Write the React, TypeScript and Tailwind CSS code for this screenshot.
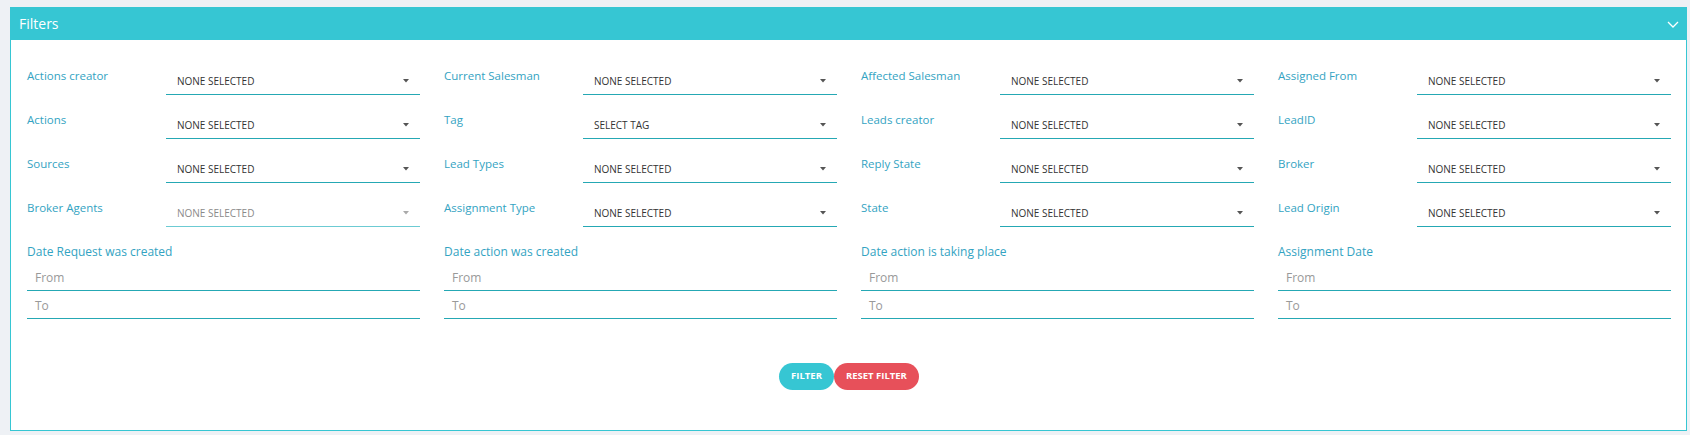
import { ReactNode } from 'react';

type Field = { label: string; value: string; disabled?: boolean };

const columns: { fields: Field[]; date: string }[] = [
  {
    fields: [
      { label: 'Actions creator', value: 'NONE SELECTED' },
      { label: 'Actions', value: 'NONE SELECTED' },
      { label: 'Sources', value: 'NONE SELECTED' },
      { label: 'Broker Agents', value: 'NONE SELECTED', disabled: true },
    ],
    date: 'Date Request was created',
  },
  {
    fields: [
      { label: 'Current Salesman', value: 'NONE SELECTED' },
      { label: 'Tag', value: 'SELECT TAG' },
      { label: 'Lead Types', value: 'NONE SELECTED' },
      { label: 'Assignment Type', value: 'NONE SELECTED' },
    ],
    date: 'Date action was created',
  },
  {
    fields: [
      { label: 'Affected Salesman', value: 'NONE SELECTED' },
      { label: 'Leads creator', value: 'NONE SELECTED' },
      { label: 'Reply State', value: 'NONE SELECTED' },
      { label: 'State', value: 'NONE SELECTED' },
    ],
    date: 'Date action is taking place',
  },
  {
    fields: [
      { label: 'Assigned From', value: 'NONE SELECTED' },
      { label: 'LeadID', value: 'NONE SELECTED' },
      { label: 'Broker', value: 'NONE SELECTED' },
      { label: 'Lead Origin', value: 'NONE SELECTED' },
    ],
    date: 'Assignment Date',
  },
];

const Caret = ({ muted }: { muted?: boolean }) => (
  <svg width="6" height="4" viewBox="0 0 6 4" className="shrink-0">
    <path d="M0 0h6L3 3.5z" fill={muted ? '#aaa' : '#555'} />
  </svg>
);

const SelectRow = ({ field }: { field: Field }) => (
  <div className="flex items-start h-[35px]">
    <div className="w-[139px] pt-[7px] text-[11.5px] leading-[18px] text-[#33a3c2]">{field.label}</div>
    <div
      className={`flex-1 h-[35px] flex items-end justify-between pl-[11px] pr-[11px] pb-[5px] border-b ${
        field.disabled ? 'border-[#6ccbd3]' : 'border-[#25a8b4]'
      }`}
    >
      <span
        className={`text-[10px] leading-[15px] ${
          field.disabled ? 'text-[#8a8a8a]' : 'text-[#333]'
        }`}
      >
        {field.value}
      </span>
      <span className="pb-[6px]">
        <Caret muted={field.disabled} />
      </span>
    </div>
  </div>
);

const DateInput = ({ children }: { children: ReactNode }) => (
  <div className="h-[28px] pt-[3px] pl-[8px] flex items-center border-b border-[#25a8b4] text-[12px] text-[#999]">
    {children}
  </div>
);

export default function App() {
  return (
    <div
      className="w-full h-screen bg-[#eef1f5] pt-[7px] pl-[10px] pr-[3px]"
      style={{ fontFamily: '"Open Sans", "Liberation Sans", sans-serif' }}
    >
      <div className="h-[424px] border border-[#36c6d3] bg-white flex flex-col">
        {/* Header */}
        <div className="h-[32px] bg-[#36c6d3] flex items-center justify-between pl-[8px] pr-[7px]">
          <span className="text-[14px] text-white leading-none">Filters</span>
          <svg width="12" height="7" viewBox="0 0 12 7" fill="none">
            <path d="M1 1l5 5 5-5" stroke="white" strokeWidth="1.3" />
          </svg>
        </div>

        {/* Body */}
        <div className="pt-[20px] pl-[16px] pr-[15px]">
          <div className="grid grid-cols-4 gap-x-[24px]">
            {columns.map((col) => (
              <div key={col.date} className="flex flex-col">
                <div className="flex flex-col gap-[9px]">
                  {col.fields.map((f) => (
                    <SelectRow key={f.label} field={f} />
                  ))}
                </div>
                <div className="mt-[16px] text-[12px] leading-[18px] text-[#33a3c2]">{col.date}</div>
                <div className="mt-[2px]">
                  <DateInput>From</DateInput>
                  <DateInput>To</DateInput>
                </div>
              </div>
            ))}
          </div>

          {/* Actions */}
          <div className="flex justify-center mt-[44px]">
            <button className="h-[27px] px-[12px] rounded-full bg-[#36c6d3] text-white text-[9.5px] font-bold">
              FILTER
            </button>
            <button className="h-[27px] pl-[12px] pr-[12px] rounded-full bg-[#e7505a] text-white text-[9.5px] font-bold">
              RESET FILTER
            </button>
          </div>
        </div>
      </div>
    </div>
  );
}
